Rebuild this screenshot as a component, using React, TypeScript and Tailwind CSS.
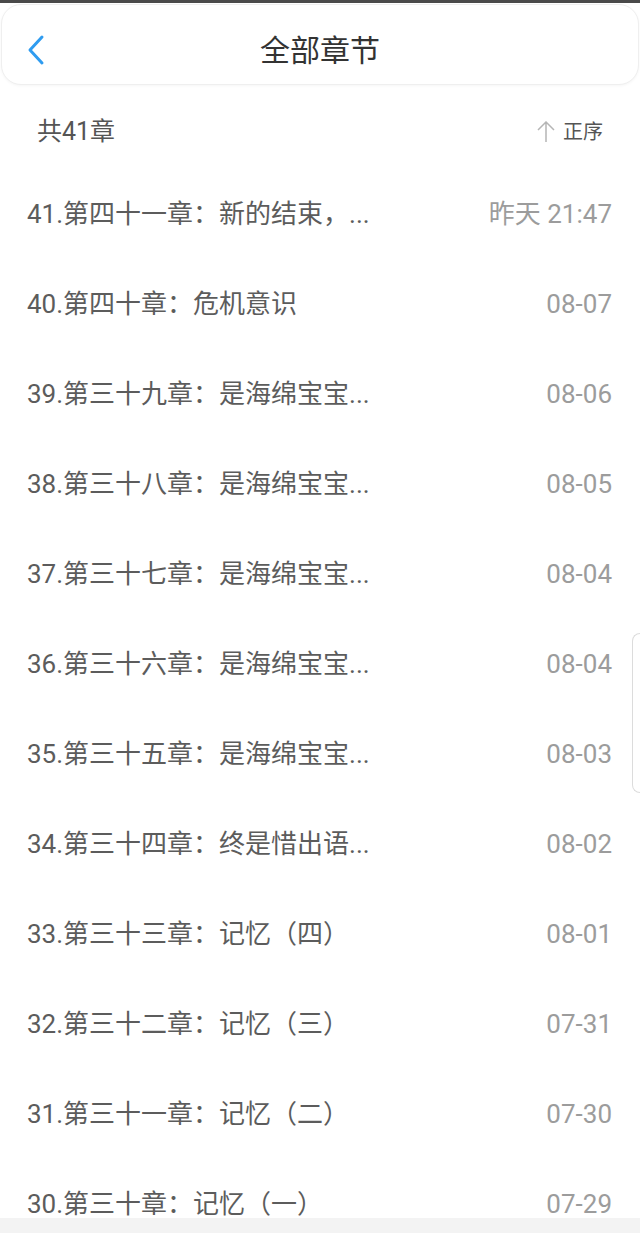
const chapters = [
  { title: '41.第四十一章：新的结束，...', date: '昨天 21:47' },
  { title: '40.第四十章：危机意识', date: '08-07' },
  { title: '39.第三十九章：是海绵宝宝...', date: '08-06' },
  { title: '38.第三十八章：是海绵宝宝...', date: '08-05' },
  { title: '37.第三十七章：是海绵宝宝...', date: '08-04' },
  { title: '36.第三十六章：是海绵宝宝...', date: '08-04' },
  { title: '35.第三十五章：是海绵宝宝...', date: '08-03' },
  { title: '34.第三十四章：终是惜出语...', date: '08-02' },
  { title: '33.第三十三章：记忆（四）', date: '08-01' },
  { title: '32.第三十二章：记忆（三）', date: '07-31' },
  { title: '31.第三十一章：记忆（二）', date: '07-30' },
  { title: '30.第三十章：记忆（一）', date: '07-29' },
]

export default function App() {
  return (
    <div
      className="relative h-[1233px] w-[640px] overflow-hidden bg-white"
      style={{ fontFamily: 'Roboto, "Noto Sans CJK SC", sans-serif' }}
    >
      <div className="h-[3px] bg-[#4a4a4a]" />

      {/* header */}
      <div className="mx-[1px] mt-[1px] flex h-[81px] items-center rounded-[20px] border border-[#efefef] bg-white pt-[11px] shadow-[0_1px_3px_rgba(0,0,0,0.04)]">
        <div className="flex w-[80px] pl-[25px]">
          <svg width="18" height="32" viewBox="0 0 18 32" fill="none">
            <polyline
              points="15,3 3,16 15,29"
              stroke="#2f9cf0"
              strokeWidth="3"
              strokeLinecap="round"
              strokeLinejoin="round"
            />
          </svg>
        </div>
        <div className="flex-1 text-center text-[30px] text-[#333]">全部章节</div>
        <div className="w-[80px]" />
      </div>

      {/* count + order */}
      <div className="flex h-[84px] items-center justify-between pl-[37px] pr-[37px] pt-[10px]">
        <span className="text-[25px] text-[#555]">共41章</span>
        <span className="flex items-center gap-[8px] text-[20px] text-[#555]">
          <svg width="18" height="22" viewBox="0 0 18 22" fill="none">
            <path d="M9 1v20M1 9l8-8 8 8" stroke="#b5b5b5" strokeWidth="1.5" />
          </svg>
          正序
        </span>
      </div>

      {/* chapter list */}
      <div className="flex flex-col">
        {chapters.map((c) => (
          <div key={c.title} className="flex h-[90px] items-center justify-between pl-[27px] pr-[28px] pt-[1px]">
            <span className="text-[26px] text-[#5c5c5c]">{c.title}</span>
            <span className="text-[26px] text-[#9c9c9c]">{c.date}</span>
          </div>
        ))}
      </div>

      {/* side scroll handle */}
      <div className="absolute right-0 top-[633px] h-[160px] w-[8px] rounded-l-[8px] border border-r-0 border-[#dcdcdc] bg-white" />

      {/* bottom strip */}
      <div className="absolute bottom-0 left-0 h-[15px] w-full bg-[#f3f3f3]" />
    </div>
  )
}
